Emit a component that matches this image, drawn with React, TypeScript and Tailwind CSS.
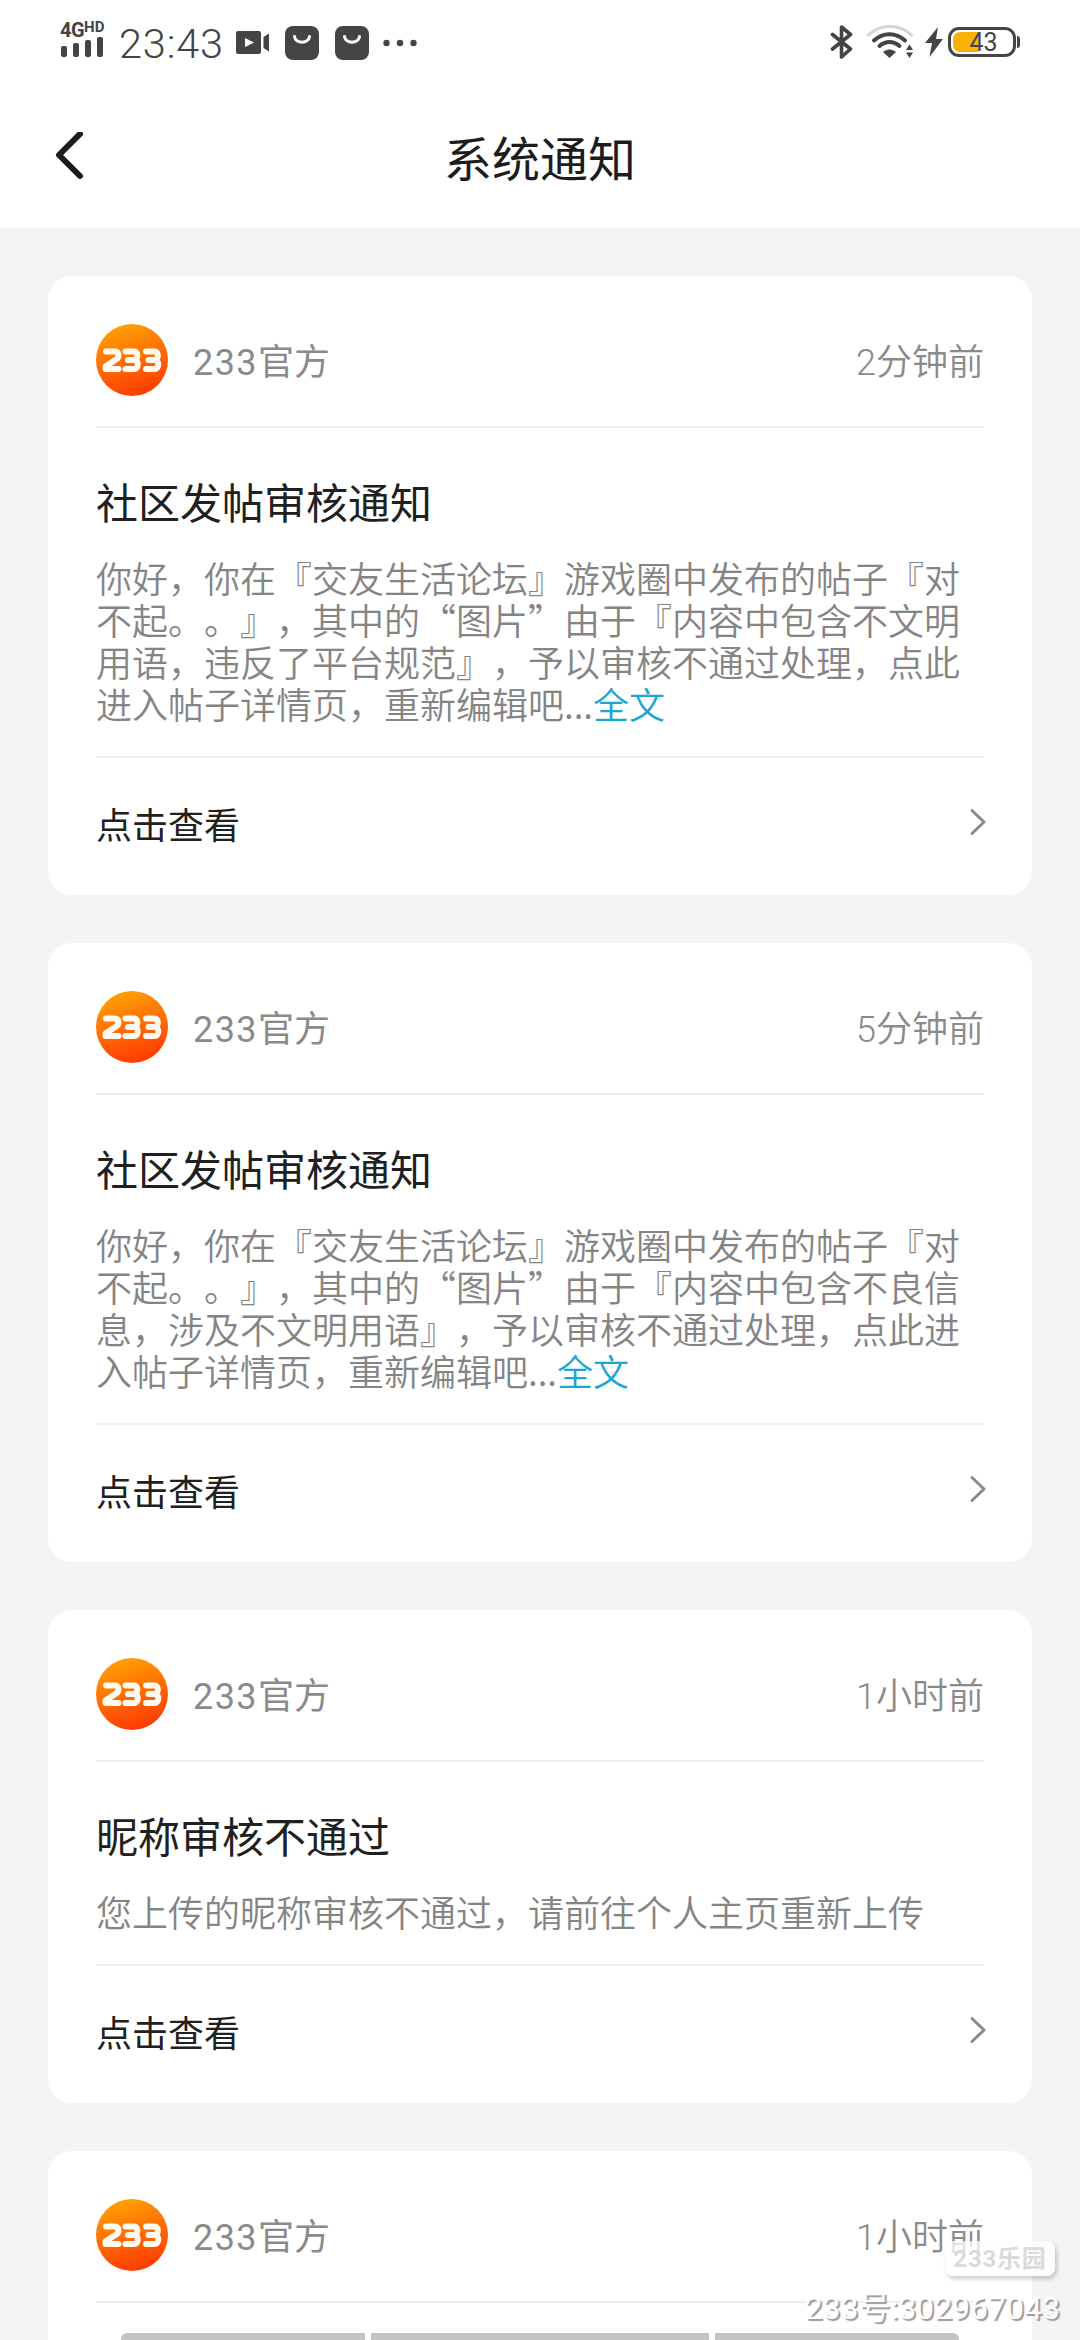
import { useId } from 'react'

type Notice = {
  time: string
  title?: string
  lines?: string[]
  more?: boolean
}

const notices: Notice[] = [
  {
    time: '2分钟前',
    title: '社区发帖审核通知',
    lines: [
      '你好，你在『交友生活论坛』游戏圈中发布的帖子『对',
      '不起。。』，其中的“图片”由于『内容中包含不文明',
      '用语，违反了平台规范』，予以审核不通过处理，点此',
      '进入帖子详情页，重新编辑吧...',
    ],
    more: true,
  },
  {
    time: '5分钟前',
    title: '社区发帖审核通知',
    lines: [
      '你好，你在『交友生活论坛』游戏圈中发布的帖子『对',
      '不起。。』，其中的“图片”由于『内容中包含不良信',
      '息，涉及不文明用语』，予以审核不通过处理，点此进',
      '入帖子详情页，重新编辑吧...',
    ],
    more: true,
  },
  {
    time: '1小时前',
    title: '昵称审核不通过',
    lines: ['您上传的昵称审核不通过，请前往个人主页重新上传'],
  },
  { time: '1小时前' },
]

function BagIcon() {
  return (
    <svg width="34" height="34" viewBox="0 0 34 34" fill="none">
      <rect width="34" height="34" rx="8" fill="#444" />
      <path d="M9.5 10.5c1 7.500 14 7.500 15 0" stroke="#fff" strokeWidth="3" strokeLinecap="round" />
    </svg>
  )
}

function StatusBar() {
  return (
    <div className="flex h-[84px] items-start justify-between pl-[60px] pr-[60px] text-[#444]">
      <div className="flex items-start">
        <div className="flex w-[46px] flex-col pt-[21px]">
          <div className="flex items-start font-[Roboto] font-bold">
            <span className="text-[20px] leading-[18px] tracking-[-0.5px]">4G</span>
            <span className="text-[15px] leading-[12px]">HD</span>
          </div>
          <svg className="-mt-[2px]" width="44" height="20" viewBox="0 0 44 20" fill="#444">
            <rect x="1" y="9" width="6" height="11" rx="2" />
            <rect x="13" y="6" width="6" height="14" rx="2" />
            <rect x="25" y="3" width="6" height="17" rx="2" />
            <rect x="37" y="0" width="6" height="20" rx="2" />
          </svg>
        </div>
        <span className="ml-[13px] w-[104px] pt-[20px] font-[Roboto] text-[41.5px] font-[350] leading-[48px] tracking-[0.8px]">
          23:43
        </span>
        <svg className="ml-[13px] mt-[31px]" width="34" height="23" viewBox="0 0 34 23" fill="#444">
          <path fillRule="evenodd" d="M2 0h21a2 2 0 0 1 2 2v19a2 2 0 0 1-2 2H2a2 2 0 0 1-2-2V2a2 2 0 0 1 2-2Zm7 7v9l9-4.500Z" />
          <path d="M27.500 6 33 2.500v18L27.500 17Z" />
        </svg>
        <div className="ml-[15px] mt-[26px] flex gap-4">
          <BagIcon />
          <BagIcon />
        </div>
        <svg className="ml-[14px] mt-[39px]" width="34" height="8" viewBox="0 0 34 8" fill="#444">
          <circle cx="3.500" cy="4" r="3.200" />
          <circle cx="17" cy="4" r="3.200" />
          <circle cx="30.500" cy="4" r="3.200" />
        </svg>
      </div>
      <div className="flex items-start">
        <svg className="mt-[24px]" width="24" height="36" viewBox="0 0 24 36" fill="none" stroke="#444" strokeWidth="3.600" strokeLinecap="round" strokeLinejoin="round">
          <path d="m2.500 10.500 18 14.500L11.500 33V3l9 7.500-18 14.500" />
        </svg>
        <svg className="ml-[13px] mt-[24px]" width="46" height="36" viewBox="0 0 46 36" fill="none" strokeLinecap="round">
          <path d="M1.500 11c12-11.500 31-11.500 43 0" stroke="#d4d4d4" strokeWidth="3" />
          <path d="M7 16.500c9-8.500 22-8.500 31 0" stroke="#444" strokeWidth="4" />
          <path d="M12.500 22c6-5.500 14-5.500 20 0" stroke="#444" strokeWidth="4" />
          <path d="M22.500 34 16 28c3.500-3.500 9.500-3.500 13 0Z" fill="#444" />
          <path d="m42.500 20.500 3.500 5.500h-7ZM42.500 34l3.500-5.500h-7Z" fill="#444" />
        </svg>
        <svg className="ml-[12px] mt-[27px]" width="18" height="30" viewBox="0 0 18 30" fill="#444">
          <path d="M13 0 0 16h7L4.500 30 18 12h-7Z" />
        </svg>
        <div className="ml-[5px] mt-[27px] flex items-center">
          <div className="relative h-[30px] w-[68px] rounded-[11px] border-[3px] border-[#444] p-[2px]">
            <div className="h-full w-[25px] rounded-l-[7px] bg-[#f9b208]" />
            <span className="absolute inset-0 pl-[3px] text-center font-[Roboto] text-[25px] leading-[25px]">43</span>
          </div>
          <div className="ml-px h-3 w-[3px] rounded-r-sm bg-[#444]" />
        </div>
      </div>
    </div>
  )
}

function Avatar() {
  const id = useId()
  return (
    <svg width="72" height="72" viewBox="0 0 72 72">
      <defs>
        <linearGradient id={id} x1="0.3" y1="0" x2="0.6" y2="1">
          <stop offset="0" stopColor="#ffa303" />
          <stop offset="0.5" stopColor="#ff6d05" />
          <stop offset="1" stopColor="#fd3a04" />
        </linearGradient>
      </defs>
      <circle cx="36" cy="36" r="36" fill={`url(#${id})`} />
      {/* wordmark drawn as rounded strokes */}
      <g fill="none" stroke="#fffaf0" strokeWidth="6" strokeLinejoin="round" strokeLinecap="round">
        <path d="M10 27.500h8.500c5 0 5 6 1.500 8L9.500 42.500V45h13" />
        <path d="M29.500 27.500h8.500c4.500 0 4.500 8 0 8.500H32m6 0c5 0 5 9 0 9h-8.500" />
        <path d="M50 27.500h8.500c4.500 0 4.500 8 0 8.500h-6m6 0c5 0 5 9 0 9H50" />
      </g>
    </svg>
  )
}

function NoticeCard({ notice }: { notice: Notice }) {
  return (
    <article className="rounded-[24px] bg-white px-12">
      <header className="flex h-[150px] items-center pb-[30px] pt-12 font-[Roboto,'Noto_Sans_CJK_SC',sans-serif] text-[36px] leading-[44px] text-[#8b8a8b]">
        <Avatar />
        <span className="ml-[25px] flex-1 pt-[5px]">
          <span className="tracking-[1.4px]">233</span>官方
        </span>
        <span className="pt-[5px] font-[350]">{notice.time}</span>
      </header>
      <div className="h-[2px] bg-[#eeecee]" />
      {notice.title ? (
        <>
          <div className="pb-8 pt-12">
            <h2 className="text-[42px] leading-[50px] text-[#212021]">{notice.title}</h2>
            <div className="mt-[30px] text-[36px] font-[350] leading-[42px] text-[#858485]">
              {notice.lines?.map((line, i) => (
                <p key={i} className="whitespace-nowrap">
                  {line}
                  {notice.more && i === 3 && <span className="text-[#1aa7d3]">全文</span>}
                </p>
              ))}
            </div>
          </div>
          <div className="h-[2px] bg-[#eeecee]" />
          <footer className="flex h-[137px] items-center justify-between pb-2 text-[36px] text-[#212021]">
            <span>点击查看</span>
            <svg className="-mr-[3px] -mt-[2px]" width="18" height="28" viewBox="0 0 18 28" fill="none" stroke="#8b8a8b" strokeWidth="3" strokeLinecap="round" strokeLinejoin="round">
              <path d="m3 2.500 12 11.500L3 25.500" />
            </svg>
          </footer>
        </>
      ) : (
        <div className="h-[120px]" />
      )}
    </article>
  )
}

export default function App() {
  return (
    <div
      lang="zh-CN"
      className="relative h-[2340px] w-[1080px] overflow-hidden bg-[#f5f4f5] font-['Noto_Sans_CJK_SC',sans-serif] [text-spacing-trim:space-all]"
    >
      <div className="h-[228px] bg-white">
        <StatusBar />
        <div className="flex h-[144px] items-center px-[54px]">
          <svg width="30" height="48" viewBox="0 0 30 48" fill="none" stroke="#1c1c1c" strokeWidth="6" strokeLinecap="round" strokeLinejoin="round">
            <path d="M26 2 5 23l21 21" />
          </svg>
          <h1 className="flex-1 pr-[30px] text-center text-[48px] leading-[60px] text-[#1c1c1c]">系统通知</h1>
        </div>
      </div>

      <main className="flex flex-col gap-12 px-12 pt-12">
        {notices.map((n, i) => (
          <NoticeCard key={i} notice={n} />
        ))}
      </main>

      {/* watermark */}
      <div className="absolute right-[25px] top-[2241px] flex h-[35px] w-[110px] items-center justify-center rounded-lg bg-white/75 font-[Roboto,'Noto_Sans_CJK_SC',sans-serif] text-[24px] font-bold leading-none tracking-[0.8px] text-[#dbd9dc] shadow-[2px_3px_4px_rgba(0,0,0,0.2)]">
        233乐园
      </div>
      <div className="absolute right-[20px] top-[2287px] font-[Roboto,'Noto_Sans_CJK_SC',sans-serif] text-[32px] leading-[42px] text-white [text-shadow:2px_2px_1px_#9b999c]">
        233号:302967043
      </div>

      {/* gesture bars */}
      <div className="absolute bottom-0 left-[121px] flex h-[7px] w-[838px] gap-[6px]">
        <div className="w-[244px] rounded-tl-md bg-[#c4c2c5]" />
        <div className="flex-1 bg-[#c4c2c5]" />
        <div className="w-[244px] rounded-tr-md bg-[#c4c2c5]" />
      </div>
    </div>
  )
}
